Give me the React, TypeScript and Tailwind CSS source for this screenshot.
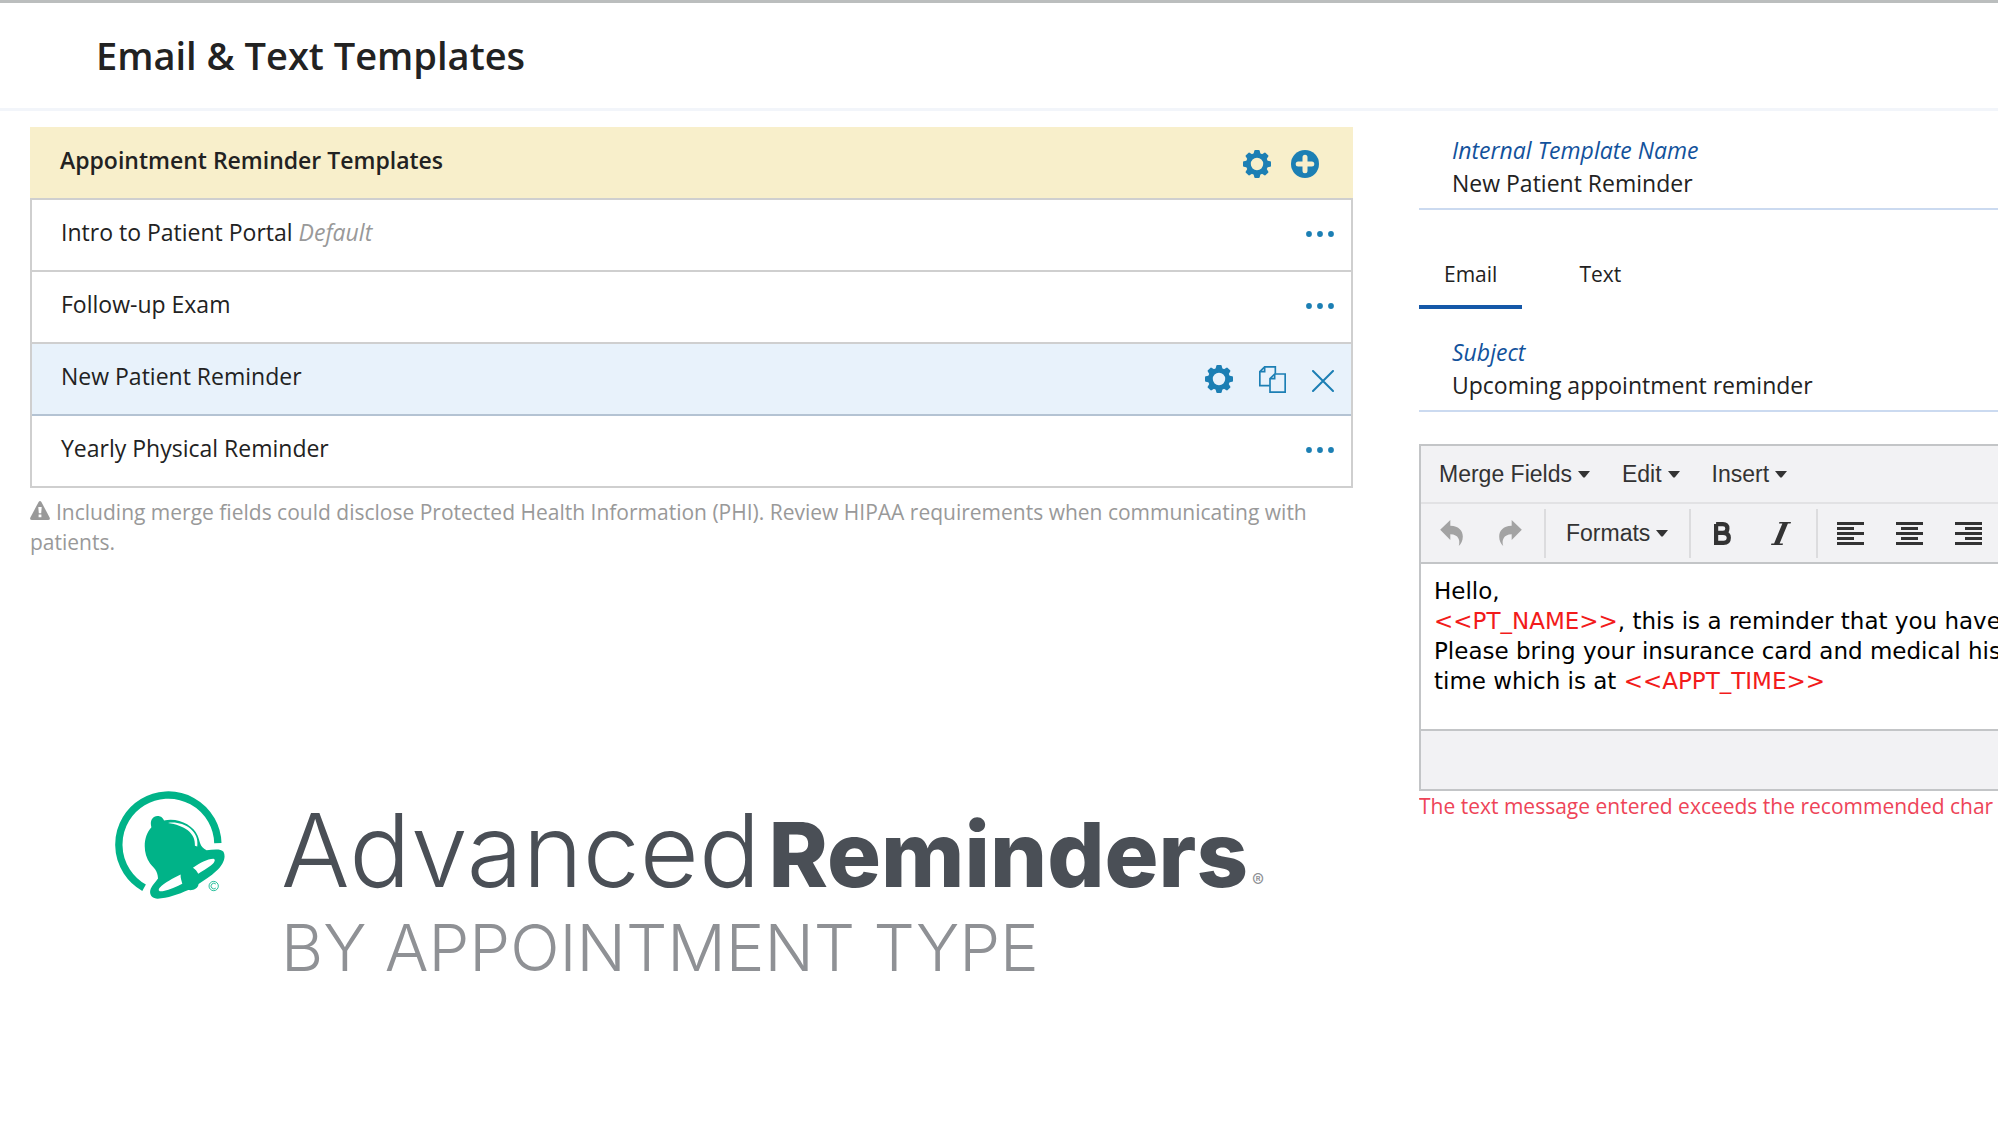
import React from "react";

const TEETH = [0, 45, 90, 135, 180, 225, 270, 315];

function Gear() {
  return (
    <svg viewBox="-14 -14 28 28" className="size-7" aria-hidden="true">
      <circle r="8.6" fill="none" stroke="currentColor" strokeWidth="4.8" />
      {TEETH.map((a) => (
        <path key={a} transform={`rotate(${a})`} fill="currentColor" d="M-3.6 -9.5 L-2.7 -13.2 Q-2.5 -14 -1.7 -14 H1.7 Q2.5 -14 2.7 -13.2 L3.6 -9.5Z" />
      ))}
    </svg>
  );
}

function PlusCircle() {
  return (
    <svg viewBox="0 0 28 28" className="size-7" aria-hidden="true">
      <circle cx="14" cy="14" r="14" fill="currentColor" />
      <path d="M14 7.2V20.8M7.2 14H20.8" stroke="#f8efcb" strokeWidth="5" strokeLinecap="round" />
    </svg>
  );
}

function Dots() {
  return (
    <svg viewBox="0 0 28 6" className="h-1.5 w-7" aria-hidden="true">
      <circle cx="3" cy="3" r="2.9" fill="currentColor" />
      <circle cx="14" cy="3" r="2.9" fill="currentColor" />
      <circle cx="25" cy="3" r="2.9" fill="currentColor" />
    </svg>
  );
}

function Copy() {
  return (
    <svg viewBox="206 44 81 81" className="size-[27px]" fill="none" stroke="currentColor" strokeWidth="5" aria-hidden="true">
      <path d="M255 67V46.500H223L208.500 61V103H238M223 46V61H208" />
      <path d="M253 68H284.500V122.500H239V82ZM239 82H253V68" />
    </svg>
  );
}

function Close() {
  return (
    <svg viewBox="0 0 22 22" className="size-[22px]" fill="none" stroke="currentColor" strokeWidth="2" strokeLinecap="round" aria-hidden="true">
      <path d="M1 1L21 21M21 1L1 21" />
    </svg>
  );
}

function Warning() {
  return (
    <svg viewBox="0 0 20 19" className="mr-1.5 inline-block h-[19px] w-5 align-baseline" aria-hidden="true">
      <path d="M8.6 1Q10 -1 11.4 1L19.6 16.4Q20.6 19 18 19H2Q-0.6 19 0.4 16.4Z" fill="currentColor" />
      <path d="M8.3 6H11.7L11.2 12.3H8.8ZM8.6 13.5H11.4V16.2H8.6Z" fill="white" />
    </svg>
  );
}

function Undo({ flip = false }: { flip?: boolean }) {
  return (
    <svg viewBox="32 36 67 77" className={flip ? "h-[26px] w-[23px] -scale-x-100" : "h-[26px] w-[23px]"} aria-hidden="true">
      <path d="M32 65L62 36V53C88 54 99 68 99 85C99 97 94 107 87 113C92 96 87 79 62 78V95Z" fill="currentColor" />
    </svg>
  );
}

function Caret() {
  return (
    <svg viewBox="0 0 12 7" className="h-[7px] w-3" aria-hidden="true">
      <path d="M0 0H12L6.7 6.6H5.3Z" fill="currentColor" />
    </svg>
  );
}

function BoldIcon() {
  return (
    <svg viewBox="0 0 17 23" className="h-[23px] w-[17px]" fill="none" stroke="currentColor" strokeWidth="4.2" aria-hidden="true">
      <path d="M2.1 2.1H9Q13.4 2.1 13.4 6.5Q13.4 10.8 9 10.8H2.1V20.9H9.6Q14.8 20.9 14.8 15.8Q14.8 10.8 9 10.8M2.1 2.1V12" />
    </svg>
  );
}

function ItalicIcon() {
  return (
    <svg viewBox="0 0 20 23" className="h-[23px] w-5" aria-hidden="true">
      <path d="M8.4 0H20L19.6 1.6H16.9L8.6 21.4H12L11.6 23H0L0.4 21.4H3.1L11.4 1.6H8Z" fill="currentColor" />
    </svg>
  );
}

function AlignIcon({ short }: { short: string }) {
  return (
    <svg viewBox="0 0 27 23" className="h-[23px] w-[27px]" stroke="currentColor" strokeWidth="3.2" aria-hidden="true">
      <path d={`M0 1.5H27M${short.replace("y", "6.5")}M0 11.5H27M${short.replace("y", "16.5")}M0 21.5H27`} />
    </svg>
  );
}

function BellLogo() {
  return (
    <svg viewBox="75 62 330 325" className="mt-1 h-[108px] w-[110px]" role="img" aria-label="Advanced Reminders bell">
      <path d="M162 353A149 149 0 1 1 384 219" fill="none" stroke="#00b388" strokeWidth="22" />
      <path
        d="M184 171C179 155 185 138 202 137C214 137 220 144 222 151C264 141 310 165 323 196C332 217 328 229 350 240C370 239 393 235 401 245C410 262 399 285 380 302C362 319 344 330 326 342C324 356 311 362 295 360C265 373 232 385 203 386C184 386 176 372 182 356C187 344 197 335 204 325C203 301 192 294 180 280C157 248 159 198 184 171Z"
        fill="#00b388"
      />
      <g fill="white">
        <path d="M234 158C275 151 330 178 322 229L315 227C318 187 282 165 234 158Z" />
        <path d="M309 293C331 278 351 267 371 266C379 268 373 280 362 287C348 297 338 303 325 311C321 304 316 297 309 293Z" />
        <path d="M272 313C248 325 224 337 209 353C202 362 209 366 221 363C240 358 259 350 277 341C275 331 271 323 272 313Z" />
      </g>
      <circle cx="371.500" cy="348" r="14" fill="none" stroke="#00b388" strokeWidth="2.500" />
      <path d="M378 342A8.500 8.500 0 1 0 378 354" fill="none" stroke="#00b388" strokeWidth="2.500" />
    </svg>
  );
}

const rows = [
  { name: "Intro to Patient Portal", isDefault: true },
  { name: "Follow-up Exam" },
  { name: "New Patient Reminder", active: true },
  { name: "Yearly Physical Reminder" },
];

function TemplateList() {
  return (
    <section>
      <div className="flex h-[71px] items-center bg-[#f8efcb] pr-[34px] pl-[30px] text-[#1c7fb4]">
        <h2 className="flex-1 pb-[5px] text-[23px] font-semibold text-[#222]">Appointment Reminder Templates</h2>
        <div className="flex items-center gap-5 pt-0.5">
          <button aria-label="Template settings"><Gear /></button>
          <button aria-label="Add template"><PlusCircle /></button>
        </div>
      </div>
      <ul className="border-x-2 border-t-2 border-[#cfcfcf]">
        {rows.map((r) => (
          <li
            key={r.name}
            className={
              r.active
                ? "flex h-[72px] items-center border-b-2 border-[#b4c3d3] bg-[#e8f2fb] pl-[29px]"
                : "flex h-[72px] items-center border-b-2 border-[#cfcfcf] pl-[29px]"
            }
          >
            <span className="flex-1 pb-[5px] text-[23px]">
              {r.name}
              {r.isDefault && <em className="text-[#999]"> Default</em>}
            </span>
            {r.active ? (
              <div className="flex items-center gap-[26px] pr-[17px] text-[#1c7fb4]">
                <button aria-label="Edit settings"><Gear /></button>
                <button aria-label="Duplicate"><Copy /></button>
                <button aria-label="Close" className="pt-1"><Close /></button>
              </div>
            ) : (
              <button aria-label={`Actions for ${r.name}`} className="mr-[17px] pt-3 pb-3.5 text-[#1c7fb4]"><Dots /></button>
            )}
          </li>
        ))}
      </ul>
      <p className="mt-[9px] text-[21px] leading-[30px] text-[#999]">
        <Warning />
        Including merge fields could disclose Protected Health Information (PHI). Review HIPAA requirements when communicating with patients.
      </p>
    </section>
  );
}

function Brand() {
  return (
    <section className="mt-[230px] flex pl-[85px]" aria-label="AdvancedReminders by appointment type">
      <BellLogo />
      <div className="ml-14 font-[Inter,sans-serif] whitespace-nowrap">
        <div className="flex items-baseline text-[#4a4f56]">
          <span className="text-[102px] leading-[126px] font-light">Advanced</span>
          <span className="ml-2 text-[90px] leading-[126px] font-extrabold">Reminders</span>
          <span className="ml-1 text-[18px] text-[#8f9195]">®</span>
        </div>
        <div className="text-[65px] leading-[60px] font-light text-[#8f9195]">BY APPOINTMENT TYPE</div>
      </div>
    </section>
  );
}

function Field({ id, label, value }: { id: string; label: string; value: string }) {
  return (
    <div className="flex flex-col border-b-2 border-[#cbdaf0] pb-2 pl-[33px] text-[23px] leading-[33px]">
      <label htmlFor={id} className="text-[#12529c] italic">{label}</label>
      <input id={id} defaultValue={value} className="h-[33px] w-full bg-transparent outline-none" />
    </div>
  );
}

function MenuButton({ children }: { children: React.ReactNode }) {
  return (
    <button className="flex items-center gap-1.5">
      {children}
      <Caret />
    </button>
  );
}

function Editor() {
  return (
    <div className="border-y-2 border-l-2 border-[#c3c5c7]">
      <div className="bg-[#f2f2f4] font-['Liberation_Sans',sans-serif] text-[23px] text-[#333]">
        <div className="flex h-[58px] items-center gap-8 border-b-2 border-[#e2e2e4] pl-[18px]">
          <MenuButton>Merge Fields</MenuButton>
          <MenuButton>Edit</MenuButton>
          <MenuButton>Insert</MenuButton>
        </div>
        <div className="flex h-[60px] items-center border-b-2 border-[#c3c5c7] pl-[19px]" role="toolbar" aria-label="Formatting">
          <div className="flex gap-9 pr-[22px] text-[#a3a3a3]">
            <button aria-label="Undo"><Undo /></button>
            <button aria-label="Redo"><Undo flip /></button>
          </div>
          <div className="flex h-[49px] border-x-2 border-[#dcdcde] pr-[21px] pl-5">
            <MenuButton>Formats</MenuButton>
          </div>
          <div className="flex h-[49px] items-center gap-10 border-r-2 border-[#dcdcde] pr-[25px] pl-[23px]">
            <button aria-label="Bold"><BoldIcon /></button>
            <button aria-label="Italic"><ItalicIcon /></button>
          </div>
          <div className="flex gap-8 pl-[19px]">
            <button aria-label="Align left"><AlignIcon short="0 yH17" /></button>
            <button aria-label="Align center"><AlignIcon short="5 yH22" /></button>
            <button aria-label="Align right"><AlignIcon short="10 yH27" /></button>
          </div>
        </div>
      </div>
      <div
        role="textbox"
        aria-multiline="true"
        aria-label="Message body"
        contentEditable
        suppressContentEditableWarning
        className="h-[165px] overflow-hidden pt-3 pl-[13px] font-['DejaVu_Sans',sans-serif] text-[23px] leading-[30px] whitespace-nowrap text-black outline-none"
      >
        <p>Hello,</p>
        <p><span className="text-[#f21b1b]">&lt;&lt;PT_NAME&gt;&gt;</span>, this is a reminder that you have</p>
        <p>Please bring your insurance card and medical his</p>
        <p>time which is at <span className="text-[#f21b1b]">&lt;&lt;APPT_TIME&gt;&gt;</span></p>
      </div>
      <div className="h-[60px] border-t-2 border-[#c3c5c7] bg-[#f2f2f4]" />
    </div>
  );
}

export default function App() {
  return (
    <div className="min-h-screen overflow-hidden bg-white font-['Open_Sans',sans-serif] text-[#222]">
      <header className="flex h-[111px] items-center border-t-[3px] border-b-[3px] border-t-[#bbbebe] border-b-[#f2f5fa] pl-[96px]">
        <h1 className="text-[38px] font-semibold">Email &amp; Text Templates</h1>
      </header>
      <main className="grid grid-cols-[minmax(0,1323fr)_minmax(0,579fr)] gap-[66px] pl-[30px]">
        <div className="pt-4">
          <TemplateList />
          <Brand />
        </div>
        <div className="pt-[23px]">
          <Field id="template-name" label="Internal Template Name" value="New Patient Reminder" />
          <div className="mt-[35px] mb-[27px] flex gap-8 text-[21px]" role="tablist">
            <button role="tab" aria-selected="true" className="h-16 border-b-4 border-[#1558a8] px-[25px]">Email</button>
            <button role="tab" aria-selected="false" className="h-16 border-b-4 border-transparent px-[25px]">Text</button>
          </div>
          <Field id="subject" label="Subject" value="Upcoming appointment reminder" />
          <div className="mt-8">
            <Editor />
          </div>
          <p className="overflow-hidden text-[21px] leading-[30px] whitespace-nowrap text-[#ee4458]">
            The text message entered exceeds the recommended char
          </p>
        </div>
      </main>
    </div>
  );
}
